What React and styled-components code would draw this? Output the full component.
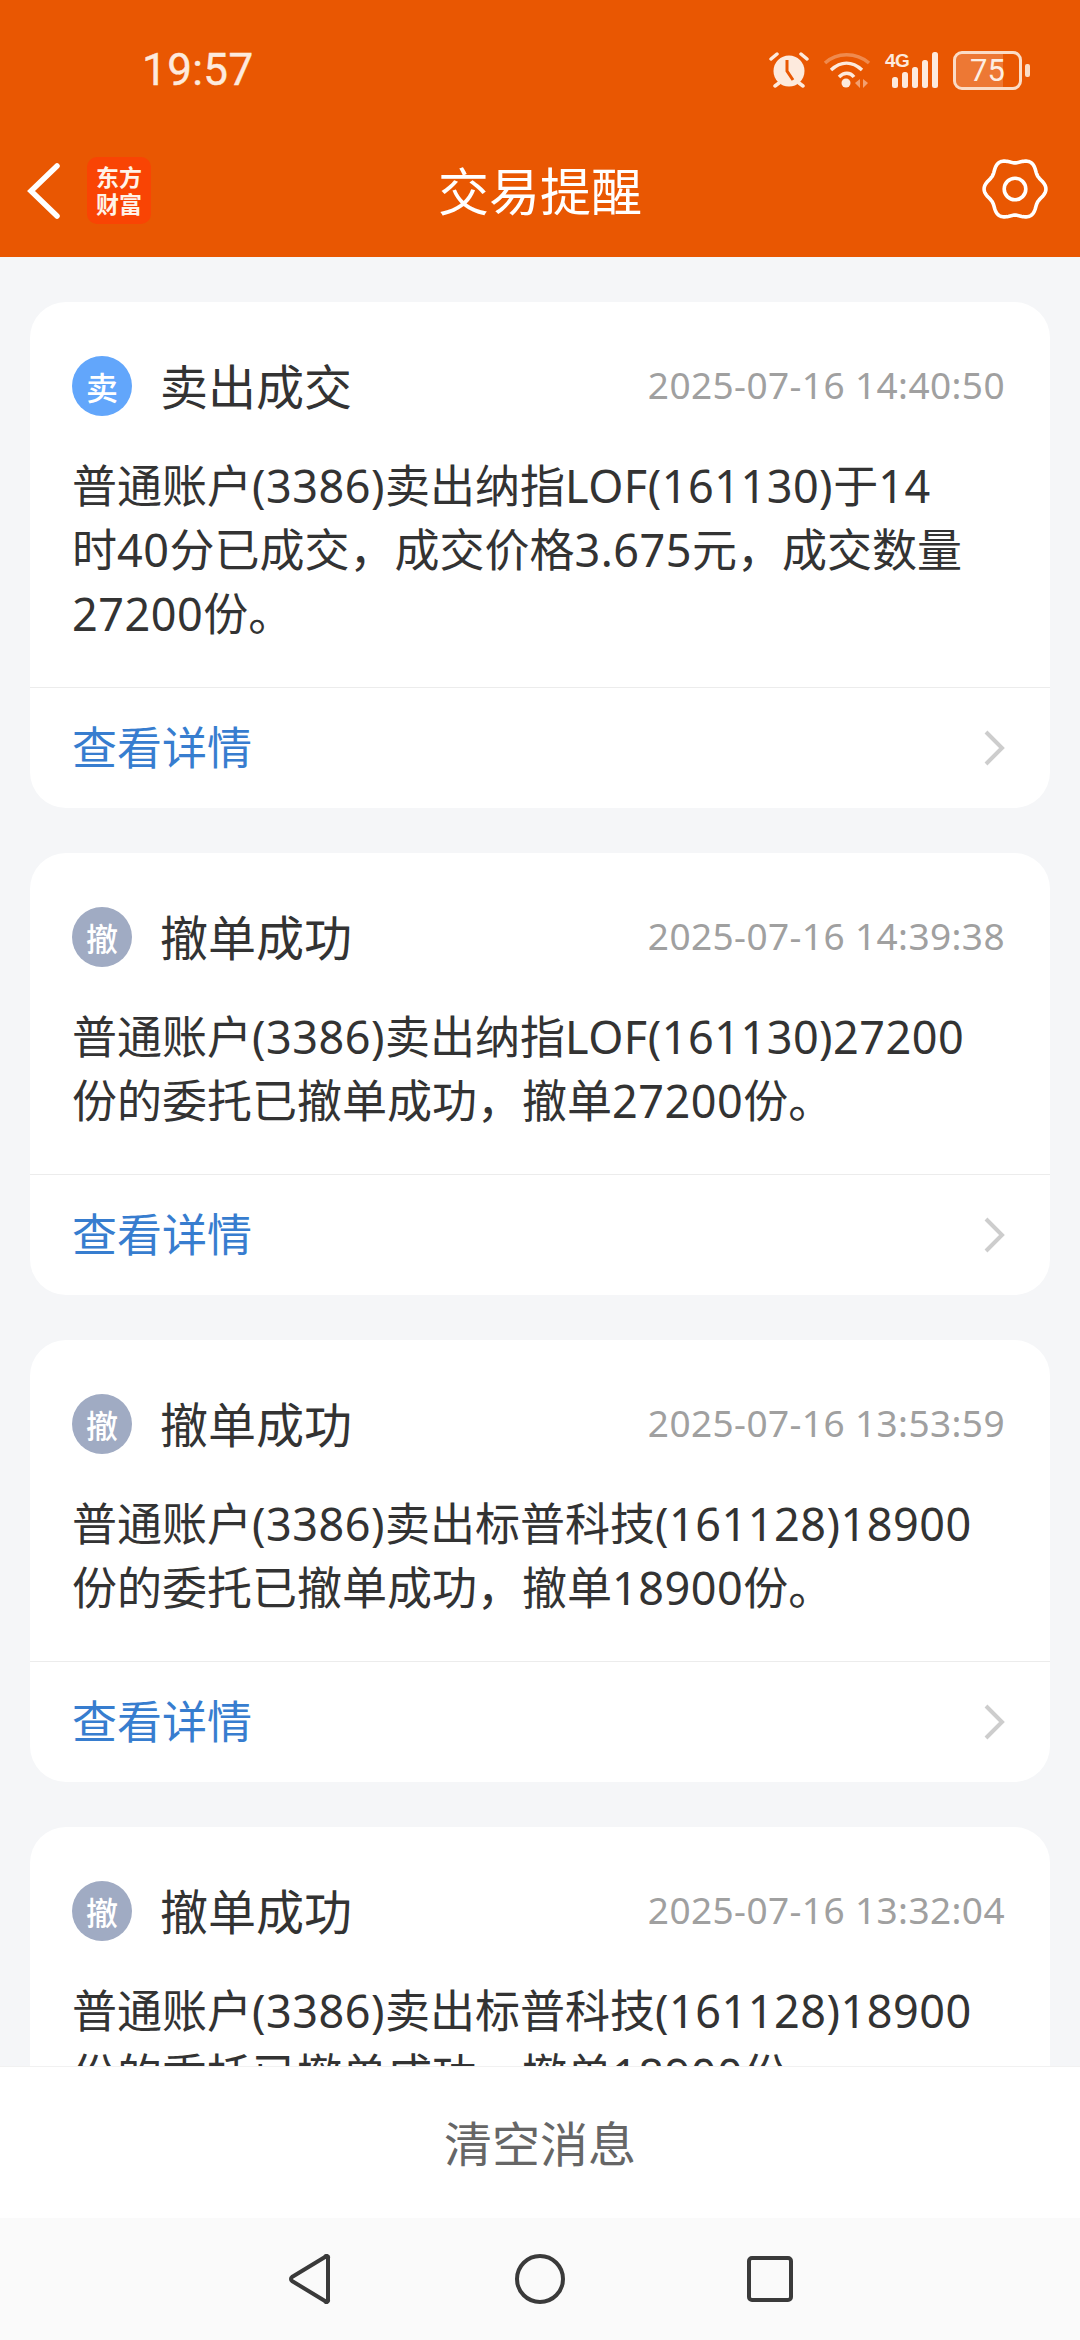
import React from "react";
import styled, { createGlobalStyle } from "styled-components";

const FONT = `Inter, "Noto Sans CJK SC", sans-serif`;

const Global = createGlobalStyle`
  html, body { margin: 0; padding: 0; background: #f5f6f8; }
  * { box-sizing: border-box; }
`;

const Page = styled.div`
  width: 1080px;
  height: 2340px;
  display: flex;
  flex-direction: column;
  overflow: hidden;
  font-family: ${FONT};
  background: #f5f6f8;
`;

const Header = styled.header`
  flex: none;
  height: 257px;
  background: #e95702;
  display: flex;
  flex-direction: column;
`;

const StatusBar = styled.div`
  height: 124px;
  padding: 16px 50px 0 142px;
  display: flex;
  align-items: center;
  justify-content: space-between;
`;

const Clock = styled.span`
  font-family: Roboto, sans-serif;
  font-size: 44px;
  line-height: 1;
  color: #fdeadd;
  letter-spacing: 0.4px;
  -webkit-text-stroke: 0.4px #fdeadd;
`;

const StatusIcons = styled.div`
  display: flex;
  align-items: center;
`;

const Slot = styled.svg`
  display: block;
  flex: none;
  margin-left: ${(p) => p.$gap || 0}px;
`;

const Signal = styled.div`
  display: flex;
  align-items: flex-end;
  width: 53px;
  height: 36px;
  margin-left: 14px;
  position: relative;
`;

const NetLabel = styled.span`
  position: absolute;
  left: 0;
  top: -1px;
  font-family: "Liberation Sans", sans-serif;
  font-size: 19px;
  font-weight: 700;
  line-height: 1;
  letter-spacing: -0.5px;
  color: #fdeadd;
`;

const Battery = styled.div`
  position: relative;
  width: 69px;
  height: 39px;
  margin-left: 15px;
  border: 3px solid #fbdcc6;
  border-radius: 9px;
  display: flex;
  align-items: center;
  justify-content: center;
  font-family: Roboto, sans-serif;
  font-size: 31px;
  color: #fdeadd;
  overflow: hidden;
`;

const BatteryFill = styled.span`
  position: absolute;
  left: 0;
  top: 0;
  bottom: 0;
  background: rgba(255, 255, 255, 0.2);
`;

const BatteryTip = styled.span`
  width: 5px;
  height: 13px;
  margin-left: 3px;
  border-radius: 2px;
  background: #fbdcc6;
`;

const NavBar = styled.div`
  flex: 1;
  display: grid;
  grid-template-columns: 1fr auto 1fr;
  align-items: center;
  padding: 0 26px;
`;

const NavLeft = styled.div`
  display: flex;
  align-items: center;
  gap: 23px;
`;

const Logo = styled.div`
  width: 64px;
  height: 67px;
  border-radius: 10px;
  background: #f94404;
  color: #fff3e8;
  font-family: "Noto Sans CJK SC", serif;
  font-weight: 700;
  font-size: 23px;
  line-height: 27px;
  text-align: center;
  padding-top: 6px;
`;

const NavTitle = styled.h1`
  margin: -4px 0 0;
  font-family: "Noto Sans CJK SC", sans-serif;
  font-size: 51px;
  font-weight: 400;
  line-height: 60px;
  color: #fff;
`;

const NavRight = styled.div`
  justify-self: end;
  margin: -3px 4px 0 0;
`;

const List = styled.main`
  flex: 1;
  min-height: 0;
  overflow: hidden;
  padding: 45px 30px 0;
  display: flex;
  flex-direction: column;
  gap: 45px;
`;

const Card = styled.article`
  flex: none;
  background: #fff;
  border-radius: 36px;
`;

const CardHead = styled.div`
  display: flex;
  align-items: center;
  padding: 48px 45px 0 42px;
  height: 120px;
`;

const Badge = styled.span`
  flex: none;
  width: 60px;
  height: 60px;
  border-radius: 50%;
  background: ${(p) => p.$color};
  color: #fff;
  font-family: "Noto Sans CJK SC", sans-serif;
  font-weight: 500;
  display: flex;
  align-items: center;
  justify-content: center;
  font-size: 32px;
  line-height: 1;
`;

const CardTitle = styled.h2`
  flex: 1;
  margin: -4px 0 0 28px;
  font-family: "Noto Sans CJK SC", sans-serif;
  font-size: 48px;
  font-weight: 400;
  line-height: 60px;
  color: #333;
`;

const Stamp = styled.time`
  font-family: "Noto Sans", sans-serif;
  font-size: 37px;
  letter-spacing: 0.4px;
  line-height: 1;
  color: #a0a0a0;
  margin-top: -3px;
`;

const Body = styled.p`
  margin: 33px 0 0;
  padding: 0 42px;
  font-size: 45px;
  line-height: 64px;
  color: #333;
`;

const Latin = styled.span`
  font-family: "Noto Sans", sans-serif;
  letter-spacing: 0.5px;
  line-height: 1;
`;

const Foot = styled.div`
  margin-top: 40px;
  height: 121px;
  border-top: 1px solid #ececec;
  padding: 0 43px 0 42px;
  display: flex;
  align-items: center;
  justify-content: space-between;
  font-size: 45px;
  color: #377dcf;
`;

const FootLabel = styled.span`
  font-family: "Noto Sans CJK SC", sans-serif;
  line-height: 60px;
  margin-top: -5px;
`;

const BottomAction = styled.div`
  flex: none;
  height: 151px;
  background: #fff;
  box-shadow: 0 -1px 0 #f1f1f1;
  position: relative;
  display: flex;
  align-items: center;
  justify-content: center;
  font-family: "Noto Sans CJK SC", sans-serif;
  font-size: 48px;
  color: #666;
  padding-bottom: 4px;
`;

const SystemNav = styled.nav`
  flex: none;
  height: 122px;
  background: #fafafa;
  display: grid;
  grid-template-columns: repeat(3, 150px);
  justify-content: center;
  gap: 80px;
  justify-items: center;
  align-items: center;
`;

const gearPath = (() => {
  const pts = [];
  for (let i = 0; i < 180; i++) {
    const t = (i / 180) * Math.PI * 2;
    const r = 28.5 + 2.4 * Math.cos(6 * t);
    pts.push(`${(35 + r * Math.cos(t)).toFixed(2)} ${(35 + r * Math.sin(t)).toFixed(2)}`);
  }
  return `M${pts.join("L")}Z`;
})();

const Alarm = () => (
  <Slot width="40" height="36" viewBox="0 0 40 36">
    <circle cx="20" cy="19" r="15.5" fill="#fdeadd" />
    <path d="M18 8v11l6 9" fill="none" stroke="#e95702" strokeWidth="3" />
    <path d="M2 7l6-5M38 7l-6-5M6 34l4-3M34 34l-4-3" stroke="#fdeadd" strokeWidth="3.5" strokeLinecap="round" />
  </Slot>
);

const Wifi = () => (
  <Slot $gap={14} width="48" height="36" viewBox="0 0 48 36">
    <path d="M2 11C14 0 33 0 46 11" fill="none" stroke="#fdeadd" strokeOpacity=".35" strokeWidth="3.5" />
    <path d="M8 18C18 9 29 9 39 18" fill="none" stroke="#fdeadd" strokeWidth="3.5" />
    <path d="M16 25C21 20 27 20 31 25" fill="none" stroke="#fdeadd" strokeWidth="3.5" />
    <circle cx="23" cy="31" r="4.5" fill="#fdeadd" />
    <path d="M37 27v9l-5-5zM40 27v9l5-5z" fill="#fdeadd" fillOpacity=".5" />
  </Slot>
);

const Bars = () => (
  <Slot width="53" height="36" viewBox="0 0 53 36">
    {[[7, 25, 11], [17, 20, 16], [27, 15, 21], [37, 8, 28], [47, 0, 36]].map(([x, y, h]) => (
      <rect key={x} x={x} y={y} width="6" height={h} rx="2.5" fill="#fdeadd" />
    ))}
  </Slot>
);

const Gear = () => (
  <Slot width="70" height="70" viewBox="0 0 70 70">
    <path d={gearPath} fill="none" stroke="#fff" strokeWidth="3.6" strokeLinejoin="round" />
    <circle cx="35" cy="35" r="10.8" fill="none" stroke="#fff" strokeWidth="3.6" />
  </Slot>
);

const Back = () => (
  <Slot width="38" height="60" viewBox="0 0 38 60">
    <path d="M31 5L5 30l26 25" fill="none" stroke="#fff" strokeWidth="5.5" strokeLinecap="round" />
  </Slot>
);

const Chevron = () => (
  <Slot width="24" height="38" viewBox="0 0 24 38">
    <path d="M3 3l16 16L3 35" fill="none" stroke="#cdcdcd" strokeWidth="4" />
  </Slot>
);

const cards = [
  { icon: "卖", color: "#62a6fb", title: "卖出成交", time: "2025-07-16 14:40:50", text: ["普通账户(3386)卖出纳指LOF(161130)于14", "时40分已成交，成交价格3.675元，成交数量", "27200份。"] },
  { icon: "撤", color: "#a0abc3", title: "撤单成功", time: "2025-07-16 14:39:38", text: ["普通账户(3386)卖出纳指LOF(161130)27200", "份的委托已撤单成功，撤单27200份。"] },
  { icon: "撤", color: "#a0abc3", title: "撤单成功", time: "2025-07-16 13:53:59", text: ["普通账户(3386)卖出标普科技(161128)18900", "份的委托已撤单成功，撤单18900份。"] },
  { icon: "撤", color: "#a0abc3", title: "撤单成功", time: "2025-07-16 13:32:04", text: ["普通账户(3386)卖出标普科技(161128)18900", "份的委托已撤单成功，撤单18900份。"] },
];

const BodyLine = ({ text }) =>
  text.split(/([A-Za-z0-9().]+)/).map((part, i) =>
    i % 2 ? <Latin key={i}>{part}</Latin> : part
  );

export default function App() {
  return (
    <Page>
      <Global />
      <Header>
        <StatusBar>
          <Clock>19:57</Clock>
          <StatusIcons>
            <Alarm />
            <Wifi />
            <Signal>
              <NetLabel>4G</NetLabel>
              <Bars />
            </Signal>
            <Battery>
              <BatteryFill style={{ width: "75%" }} />
              75
            </Battery>
            <BatteryTip />
          </StatusIcons>
        </StatusBar>
        <NavBar>
          <NavLeft>
            <Back />
            <Logo>东方<br />财富</Logo>
          </NavLeft>
          <NavTitle>交易提醒</NavTitle>
          <NavRight><Gear /></NavRight>
        </NavBar>
      </Header>
      <List>
        {cards.map((c) => (
          <Card key={c.time}>
            <CardHead>
              <Badge $color={c.color}>{c.icon}</Badge>
              <CardTitle>{c.title}</CardTitle>
              <Stamp>{c.time}</Stamp>
            </CardHead>
            <Body>
              {c.text.map((l, i) => (
                <React.Fragment key={i}>{i > 0 && <br />}<BodyLine text={l} /></React.Fragment>
              ))}
            </Body>
            <Foot>
              <FootLabel>查看详情</FootLabel>
              <Chevron />
            </Foot>
          </Card>
        ))}
      </List>
      <BottomAction>清空消息</BottomAction>
      <SystemNav>
        <svg width="44" height="50" viewBox="0 0 44 50">
          <path d="M40 4v42a1.500 1.500 0 0 1-3 1L4 27a2.500 2.500 0 0 1 0-4L37 3a1.500 1.500 0 0 1 3 1z" fill="none" stroke="#3a3a3a" strokeWidth="4" strokeLinejoin="round" />
        </svg>
        <svg width="52" height="52" viewBox="0 0 52 52">
          <circle cx="26" cy="26" r="23" fill="none" stroke="#3a3a3a" strokeWidth="4" />
        </svg>
        <svg width="46" height="46" viewBox="0 0 46 46">
          <rect x="2" y="2" width="42" height="42" rx="3" fill="none" stroke="#3a3a3a" strokeWidth="4" />
        </svg>
      </SystemNav>
    </Page>
  );
}
